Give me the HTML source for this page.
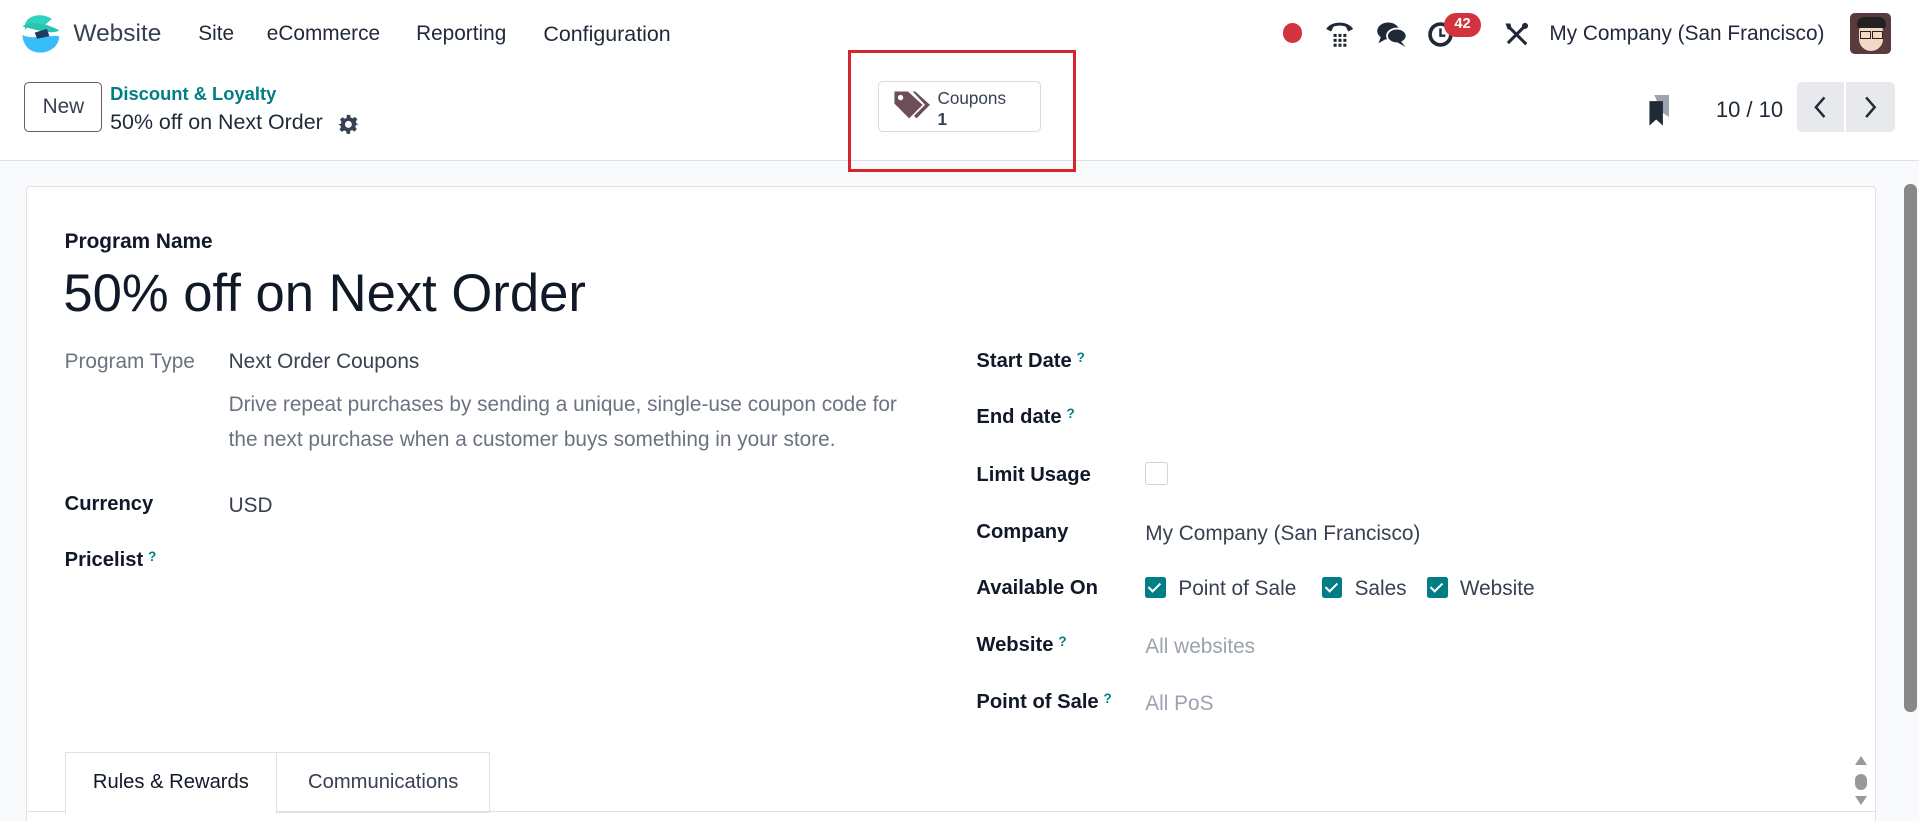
<!DOCTYPE html>
<html><head><meta charset="utf-8">
<style>
html,body{margin:0;padding:0;overflow:hidden}
body{width:1568px;height:671px;zoom:1.22385;font-family:"Liberation Sans",sans-serif;color:#1f2937;background:#f9fafb;position:relative}
.a{position:absolute;white-space:nowrap}
.nav{position:absolute;left:0;top:0;width:1568px;height:56px;background:#fff}
.cp{position:absolute;left:0;top:56px;width:1568px;height:75px;background:#fff;border-bottom:1px solid #dcdfe3}
.card{position:absolute;left:21px;top:152px;width:1510px;height:530px;background:#fff;border:1px solid #dee2e6;border-radius:3px}
.lbl{font-weight:bold;font-size:16.5px;color:#111827}
.val{font-size:17px;color:#374151}
.q{color:#017e84;font-size:11px;vertical-align:top;margin-left:4px}
.cb{position:absolute;width:17px;height:17px;background:#017e84;border-radius:2px}
.cb:after{content:"";position:absolute;left:5px;top:2px;width:4px;height:8px;border:solid #fff;border-width:0 2px 2px 0;transform:rotate(45deg)}
</style></head><body>
<div class="nav">
 <svg class="a" style="left:16px;top:11px" width="34" height="34" viewBox="0 0 34 34">
  <path d="M4 11 C4 2 18 -1 26 5 L20 10 C14 7 8 9 4 14Z" fill="#2dd4bf"/>
  <path d="M2 11 C10 5 24 10 32 14 C28 18 14 14 2 11Z" fill="#2ac5b0"/>
  <path d="M2 18 C10 22 22 18 32 19 C32 30 18 36 8 30 C4 27 2 22 2 18Z" fill="#38bdf8"/>
  <path d="M12 16 L22 13 L24 19 L14 21Z" fill="#1e3a5f"/>
 </svg>
 <div class="a" style="left:60px;top:16px;font-size:20px;color:#374151">Website</div>
 <div class="a" style="left:162px;top:18px;font-size:17px;color:#1f2937">Site</div>
 <div class="a" style="left:218px;top:18px;font-size:17px;color:#1f2937">eCommerce</div>
 <div class="a" style="left:340px;top:18px;font-size:17px;color:#1f2937">Reporting</div>
 <div class="a" style="left:444px;top:18px;font-size:17.5px;color:#1f2937">Configuration</div>
 <div class="a" style="left:1048px;top:19px;width:16px;height:16px;border-radius:50%;background:#d2333f"></div>
 <svg class="a" style="left:1083px;top:15px" width="24" height="24" viewBox="0 0 24 24"><path d="M1 9 C5 2 19 2 23 9 L19 11 L17 7 C13 6 11 6 7 7 L5 11Z" fill="#1f2937"/><g fill="#1f2937"><rect x="7" y="13" width="2.5" height="2.5"/><rect x="11" y="13" width="2.5" height="2.5"/><rect x="15" y="13" width="2.5" height="2.5"/><rect x="7" y="17" width="2.5" height="2.5"/><rect x="11" y="17" width="2.5" height="2.5"/><rect x="15" y="17" width="2.5" height="2.5"/><rect x="7" y="21" width="2.5" height="2.5"/><rect x="11" y="21" width="2.5" height="2.5"/><rect x="15" y="21" width="2.5" height="2.5"/></g></svg>
 <svg class="a" style="left:1124px;top:16px" width="26" height="24" viewBox="0 0 26 24"><ellipse cx="10" cy="9" rx="9" ry="7" fill="#1f2937"/><path d="M4 14 L2 19 L9 15Z" fill="#1f2937"/><ellipse cx="17" cy="13" rx="8" ry="6" fill="#1f2937" stroke="#fff" stroke-width="1.5"/><path d="M20 17 L24 22 L17 18Z" fill="#1f2937"/></svg>
 <svg class="a" style="left:1166px;top:17px" width="22" height="22" viewBox="0 0 22 22"><circle cx="11" cy="11" r="8.5" fill="none" stroke="#1f2937" stroke-width="3"/><path d="M11 6 V12 H15" stroke="#1f2937" stroke-width="2" fill="none"/></svg>
 <div class="a" style="left:1180px;top:11px;width:30px;height:19px;border-radius:10px;background:#d2333f;color:#fff;font-size:12px;font-weight:bold;text-align:center;line-height:19px">42</div>
 <svg class="a" style="left:1228px;top:17px" width="22" height="22" viewBox="0 0 22 22"><path d="M4 4 L19 19" stroke="#1f2937" stroke-width="2.5"/><path d="M17 5 L4 18" stroke="#1f2937" stroke-width="2.5"/><path d="M2 2 L6 2 L7 6 L4 7Z" fill="#1f2937"/><circle cx="18" cy="4" r="2.5" fill="#1f2937"/></svg>
 <div class="a" style="left:1266px;top:18px;font-size:17px;color:#1f2937">My Company (San Francisco)</div>
 <div class="a" style="left:1512px;top:11px;width:33px;height:33px;border-radius:4px;background:#5a3a3f;overflow:hidden">
  <div style="position:absolute;left:7px;top:9px;width:20px;height:22px;background:#f3d9c4;border-radius:6px 6px 10px 10px"></div>
  <div style="position:absolute;left:5px;top:3px;width:24px;height:9px;background:#222;border-radius:6px 6px 2px 2px"></div>
  <div style="position:absolute;left:8px;top:14px;width:7px;height:5px;border:1.5px solid #222"></div>
  <div style="position:absolute;left:18px;top:14px;width:7px;height:5px;border:1.5px solid #222"></div>
 </div>
</div>
<div class="cp">
 <div class="a" style="left:20px;top:11px;width:62px;height:39px;border:1px solid #6b5b63;border-radius:4px;font-size:17px;text-align:center;line-height:39px;color:#374151">New</div>
 <div class="a" style="left:90px;top:12px;font-size:15px;font-weight:bold;color:#017e84">Discount &amp; Loyalty</div>
 <div class="a" style="left:90px;top:34px;font-size:17.5px;color:#1f2937">50% off on Next Order</div>
 <svg class="a" style="left:276px;top:37px" width="17" height="17" viewBox="0 0 24 24"><path fill="#374151" d="M10 1h4l.6 3.1 2.3 1 2.6-1.8 2.8 2.8-1.8 2.6 1 2.3L24 12v0l-3.1.6-1 2.3 1.8 2.6-2.8 2.8-2.6-1.8-2.3 1L14 23h-4l-.6-3.1-2.3-1-2.6 1.8-2.8-2.8 1.8-2.6-1-2.3L0 12l3.1-.6 1-2.3-1.8-2.6 2.8-2.8 2.6 1.8 2.3-1zM12 8a4 4 0 100 8 4 4 0 000-8z"/></svg>
 <div class="a" style="left:717px;top:10px;width:132px;height:40px;border:1px solid #d8dadd;border-radius:4px;background:#fff"></div>
 <svg class="a" style="left:729px;top:17px" width="32" height="26" viewBox="0 0 32 26"><path d="M2 2 H13 L25 13 L14 24 L2 12Z" fill="#6b4e57"/><circle cx="7" cy="7" r="2.2" fill="#fff"/><path d="M17 2 H19 L31 13 L20 24 L18 22 L27 13Z" fill="#6b4e57"/></svg>
 <div class="a" style="left:766px;top:16px;font-size:14px;color:#374151">Coupons</div>
 <div class="a" style="left:766px;top:33px;font-size:14px;font-weight:bold;color:#374151">1</div>
 <div class="a" style="left:693px;top:-15px;width:181px;height:95px;border:3px solid #d9232d"></div>
 <svg class="a" style="left:1346px;top:22px" width="20" height="26" viewBox="0 0 20 26"><path d="M6 0 H18 V18 L12 14Z" fill="#9ca3af"/><path d="M2 5 H13 V25 L7.5 20 L2 25Z" fill="#1f2937"/></svg>
 <div class="a" style="left:1402px;top:23px;font-size:18px;color:#1f2937">10 / 10</div>
 <div class="a" style="left:1468px;top:11px;width:80px;height:41px;border-radius:4px;background:#e7e9ed"></div>
 <div class="a" style="left:1507px;top:11px;width:1px;height:41px;background:#fff"></div>
 <svg class="a" style="left:1480px;top:22px" width="16" height="20" viewBox="0 0 16 20"><path d="M11 2 L4 10 L11 18" stroke="#1f2937" stroke-width="2" fill="none"/></svg>
 <svg class="a" style="left:1520px;top:22px" width="16" height="20" viewBox="0 0 16 20"><path d="M5 2 L12 10 L5 18" stroke="#1f2937" stroke-width="2" fill="none"/></svg>
</div>
<div class="a" style="left:1556px;top:150px;width:10px;height:432px;background:#888;border-radius:5px"></div>
<div class="card">
 <div class="a lbl" style="left:31px;top:35px;font-size:17px">Program Name</div>
 <div class="a" style="left:30px;top:62px;font-size:43px;color:#111827">50% off on Next Order</div>
 <div class="a" style="left:31px;top:133px;font-size:17px;color:#6b7280">Program Type</div>
 <div class="a val" style="left:165px;top:133px">Next Order Coupons</div>
 <div class="a" style="left:165px;top:163px;font-size:17px;color:#6b7280;line-height:29px">Drive repeat purchases by sending a unique, single-use coupon code for<br>the next purchase when a customer buys something in your store.</div>
 <div class="a lbl" style="left:31px;top:250px">Currency</div>
 <div class="a val" style="left:165px;top:251px">USD</div>
 <div class="a lbl" style="left:31px;top:296px">Pricelist<span class="q">?</span></div>

 <div class="a lbl" style="left:776px;top:133px">Start Date<span class="q">?</span></div>
 <div class="a lbl" style="left:776px;top:179px">End date<span class="q">?</span></div>
 <div class="a lbl" style="left:776px;top:226px">Limit Usage</div>
 <div class="a" style="left:914px;top:225px;width:17px;height:17px;border:1px solid #d1d5db;border-radius:2px"></div>
 <div class="a lbl" style="left:776px;top:273px">Company</div>
 <div class="a val" style="left:914px;top:274px">My Company (San Francisco)</div>
 <div class="a lbl" style="left:776px;top:319px">Available On</div>
 <div class="cb" style="left:914px;top:319px"></div>
 <div class="a val" style="left:941px;top:319px">Point of Sale</div>
 <div class="cb" style="left:1058px;top:319px"></div>
 <div class="a val" style="left:1085px;top:319px">Sales</div>
 <div class="cb" style="left:1144px;top:319px"></div>
 <div class="a val" style="left:1171px;top:319px">Website</div>
 <div class="a lbl" style="left:776px;top:365px">Website<span class="q">?</span></div>
 <div class="a" style="left:914px;top:366px;font-size:17px;color:#9ca3af">All websites</div>
 <div class="a lbl" style="left:776px;top:412px">Point of Sale<span class="q">?</span></div>
 <div class="a" style="left:914px;top:413px;font-size:17px;color:#9ca3af">All PoS</div>

 <div class="a" style="left:0;top:510px;width:1510px;height:1px;background:#dee2e6"></div>
 <div class="a" style="left:31px;top:462px;width:172px;height:49px;border:1px solid #dee2e6;border-bottom:1px solid #fff;background:#fff;font-size:16.5px;color:#111827;text-align:center;line-height:49px">Rules &amp; Rewards</div>
 <div class="a" style="left:204px;top:462px;width:173px;height:48px;border:1px solid #dee2e6;font-size:16.5px;color:#374151;text-align:center;line-height:49px">Communications</div>
 <div class="a" style="left:1494px;top:465px;width:0;height:0;border-left:5px solid transparent;border-right:5px solid transparent;border-bottom:8px solid #999"></div>
 <div class="a" style="left:1494px;top:480px;width:10px;height:13px;border-radius:5px;background:#999"></div>
 <div class="a" style="left:1494px;top:498px;width:0;height:0;border-left:5px solid transparent;border-right:5px solid transparent;border-top:8px solid #999"></div>
</div>
</body></html>
